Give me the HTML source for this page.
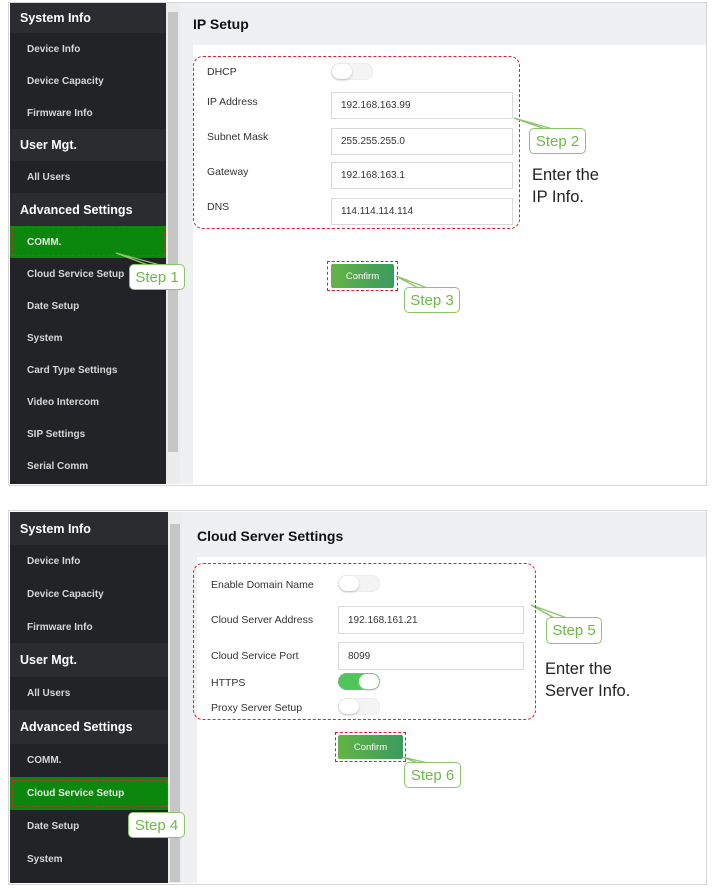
<!DOCTYPE html>
<html><head><style>
body{margin:0;width:716px;height:890px;background:#fff;position:relative;overflow:hidden;font-family:"Liberation Sans",sans-serif}
.a{position:absolute}
.frame{border:1px solid #d6d6d6;box-sizing:border-box}
.sb{background:#222327}
.row{position:absolute;left:0;right:0;color:#d6d6d6;font-size:10px;font-weight:bold;padding-left:17px;box-sizing:border-box;display:flex;align-items:center}
.hd{background:#2b2c30;color:#fff;font-size:12.5px;padding-left:10px}
.lbl{position:absolute;font-size:10.5px;color:#333;transform:translateY(-50%)}
.inp{position:absolute;border:1px solid #d8d8d8;background:#fff;box-sizing:border-box;font-size:10px;color:#333;padding-left:9px;display:flex;align-items:center}
.tog{position:absolute;width:42px;height:17px;border-radius:9px;background:#f4f4f4;box-shadow:inset 0 0 1px #ccc}
.tog:after{content:"";position:absolute;left:1px;top:1px;width:20px;height:15px;border-radius:8px;background:#fff;box-shadow:0 1px 2px #bbb}
.tog.on{background:#4fc55a}.tog.on:after{left:21px}
.dash{position:absolute;border:1.5px dashed #e0202c;box-sizing:border-box}
.step{position:absolute;border:1.5px solid #8cc46a;border-radius:5px;background:#fff;color:#6fb84a;font-size:15px;display:flex;align-items:center;justify-content:center;box-sizing:border-box}
.btn{position:absolute;background:linear-gradient(90deg,#63b446,#3c9a5e);color:#fff;font-size:9.5px;display:flex;align-items:center;justify-content:center;border-radius:2px}
.big{position:absolute;font-size:16.5px;color:#222;line-height:22px}
.title{position:absolute;font-weight:bold;font-size:14px;color:#111}
</style></head><body>

<!-- TOP PANEL -->
<div class="a frame" style="left:8px;top:2px;width:699px;height:484px"></div>
<div class="a sb" style="left:10px;top:3px;width:156px;height:481px">
<div class="row hd" style="top:0;height:30px">System Info</div>
<div class="row" style="top:30px;height:32px">Device Info</div>
<div class="row" style="top:62px;height:32px">Device Capacity</div>
<div class="row" style="top:94px;height:32px">Firmware Info</div>
<div class="row hd" style="top:126px;height:32px">User Mgt.</div>
<div class="row" style="top:158px;height:32px">All Users</div>
<div class="row hd" style="top:190px;height:33px">Advanced Settings</div>
<div class="row" style="top:223px;height:32px;background:#0b870d;color:#e8e8e8">COMM.</div>
<div class="row" style="top:255px;height:32px">Cloud Service Setup</div>
<div class="row" style="top:287px;height:32px">Date Setup</div>
<div class="row" style="top:319px;height:32px">System</div>
<div class="row" style="top:351px;height:32px">Card Type Settings</div>
<div class="row" style="top:383px;height:32px">Video Intercom</div>
<div class="row" style="top:415px;height:32px">SIP Settings</div>
<div class="row" style="top:447px;height:32px">Serial Comm</div>
</div>
<div class="a" style="left:166px;top:3px;width:14px;height:481px;background:#ececec"></div>
<div class="a" style="left:168px;top:12px;width:10px;height:440px;background:#c6c6c6"></div>
<div class="a" style="left:180px;top:3px;width:526px;height:42px;background:#eef0f2"></div>
<div class="a" style="left:180px;top:45px;width:13px;height:439px;background:#eef0f2"></div>
<div class="title" style="left:193px;top:16px">IP Setup</div>
<div class="dash" style="left:193px;top:56px;width:327px;height:173px;border-radius:10px"></div>
<div class="lbl" style="left:207px;top:72px">DHCP</div>
<div class="lbl" style="left:207px;top:102px">IP Address</div>
<div class="lbl" style="left:207px;top:137px">Subnet Mask</div>
<div class="lbl" style="left:207px;top:172px">Gateway</div>
<div class="lbl" style="left:207px;top:207px">DNS</div>
<div class="tog" style="left:331px;top:63px"></div>
<div class="inp" style="left:331px;top:92px;width:182px;height:27px">192.168.163.99</div>
<div class="inp" style="left:331px;top:128px;width:182px;height:27px">255.255.255.0</div>
<div class="inp" style="left:331px;top:162px;width:182px;height:27px">192.168.163.1</div>
<div class="inp" style="left:331px;top:198px;width:182px;height:27px">114.114.114.114</div>
<div class="dash" style="left:327px;top:261px;width:71px;height:30px"></div>
<div class="btn" style="left:331px;top:264px;width:63px;height:24px">Confirm</div>
<div class="dash" style="left:12px;top:227px;width:153px;height:29px;border-color:#b33"></div>

<svg class="a" style="left:0;top:0" width="716" height="890"><g stroke="#8cc46a" stroke-width="1.3" fill="none">
<path d="M514 118 L548 130 M514 118 L556 130"/>
<path d="M396 276 L420 289 M396 276 L430 289"/>
<path d="M116 253 L148 265 M116 253 L160 265"/>
<path d="M531 605 L556 619 M531 605 L570 619"/>
<path d="M402 757 L418 763 M402 757 L428 763"/>
<path d="M118 803 L144 813 M118 803 L156 813"/>
</g></svg>

<div class="step" style="left:529px;top:128px;width:57px;height:26px">Step 2</div>
<div class="big" style="left:532px;top:164px">Enter the<br>IP Info.</div>
<div class="step" style="left:404px;top:287px;width:56px;height:26px">Step 3</div>
<div class="step" style="left:129px;top:264px;width:56px;height:26px">Step 1</div>

<!-- BOTTOM PANEL -->
<div class="a frame" style="left:8px;top:510px;width:699px;height:375px"></div>
<div class="a sb" style="left:10px;top:512px;width:158px;height:371px">
<div class="row hd" style="top:0;height:33px">System Info</div>
<div class="row" style="top:33px;height:33px">Device Info</div>
<div class="row" style="top:66px;height:33px">Device Capacity</div>
<div class="row" style="top:99px;height:32px">Firmware Info</div>
<div class="row hd" style="top:131px;height:34px">User Mgt.</div>
<div class="row" style="top:165px;height:33px">All Users</div>
<div class="row hd" style="top:198px;height:34px">Advanced Settings</div>
<div class="row" style="top:232px;height:33px">COMM.</div>
<div class="row" style="top:265px;height:33px;background:#0b870d;color:#e8e8e8">Cloud Service Setup</div>
<div class="row" style="top:298px;height:33px">Date Setup</div>
<div class="row" style="top:331px;height:33px">System</div>
</div>
<div class="a" style="left:168px;top:512px;width:14px;height:371px;background:#ececec"></div>
<div class="a" style="left:170px;top:524px;width:10px;height:358px;background:#c6c6c6"></div>
<div class="a" style="left:182px;top:512px;width:524px;height:45px;background:#eef0f2"></div>
<div class="a" style="left:182px;top:557px;width:15px;height:326px;background:#eef0f2"></div>
<div class="title" style="left:197px;top:528px">Cloud Server Settings</div>
<div class="dash" style="left:193px;top:563px;width:343px;height:157px;border-radius:10px"></div>
<div class="lbl" style="left:211px;top:585px">Enable Domain Name</div>
<div class="lbl" style="left:211px;top:620px">Cloud Server Address</div>
<div class="lbl" style="left:211px;top:656px">Cloud Service Port</div>
<div class="lbl" style="left:211px;top:683px">HTTPS</div>
<div class="lbl" style="left:211px;top:708px">Proxy Server Setup</div>
<div class="tog" style="left:338px;top:575px"></div>
<div class="inp" style="left:338px;top:606px;width:186px;height:28px">192.168.161.21</div>
<div class="inp" style="left:338px;top:642px;width:186px;height:28px">8099</div>
<div class="tog on" style="left:338px;top:673px"></div>
<div class="tog" style="left:338px;top:698px"></div>
<div class="dash" style="left:335px;top:732px;width:71px;height:30px"></div>
<div class="btn" style="left:338px;top:735px;width:65px;height:24px">Confirm</div>
<div class="dash" style="left:12px;top:780px;width:156px;height:27px;border-color:#b33"></div>
<div class="step" style="left:546px;top:617px;width:56px;height:27px">Step 5</div>
<div class="big" style="left:545px;top:658px">Enter the<br>Server Info.</div>
<div class="step" style="left:404px;top:762px;width:57px;height:26px">Step 6</div>
<div class="step" style="left:128px;top:812px;width:57px;height:26px">Step 4</div>
</body></html>
